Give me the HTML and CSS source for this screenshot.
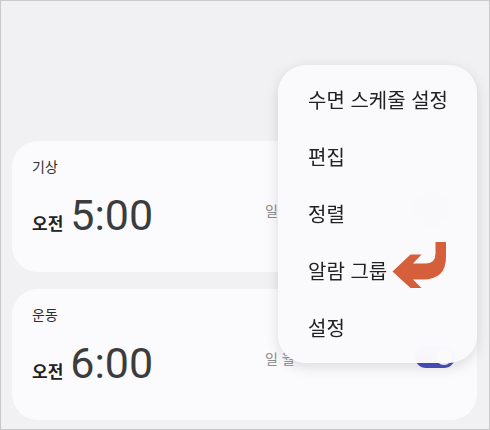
FILE: index.html
```html
<!DOCTYPE html>
<html lang="ko">
<head>
    <meta charset="UTF-8">
    <meta name="viewport" content="width=device-width, initial-scale=1.0">
    <title>알람</title>
    <link rel="stylesheet" href="styles.css">
</head>
<body>
    <div class="screen">
        <div class="alarm-list">
            <div class="card">
                <div class="label">기상</div>
                <div class="row">
                    <div class="time"><span class="ampm">오전</span><span class="clock">5:00</span></div>
                    <div class="days">일 월</div>
                    <div class="toggle on"><span class="knob"></span></div>
                </div>
            </div>
            <div class="card">
                <div class="label">운동</div>
                <div class="row">
                    <div class="time"><span class="ampm">오전</span><span class="clock">6:00</span></div>
                    <div class="days">일 월</div>
                    <div class="toggle on"><span class="knob"></span></div>
                </div>
            </div>
        </div>

        <ul class="menu">
            <li>수면 스케줄 설정</li>
            <li>편집</li>
            <li>정렬</li>
            <li>알람 그룹</li>
            <li>설정</li>
        </ul>

        <svg class="pointer" width="62" height="56" viewBox="0 0 62 56">
            <path d="M3.5 33.5 L21.5 16.5 L32.5 16.5 L24 25.5 L37 25.5 Q46.5 25.5 46.5 15 L46.5 4 L57 4 L57 19 Q57 41.5 34 41.5 L24 41.5 L32.5 50 L21.5 50 Z" fill="#d65f3b"/>
        </svg>
    </div>
</body>
</html>
```

FILE: styles.css
```css
body {
    margin: 0;
    font-family: "Noto Sans CJK KR", "Noto Sans", sans-serif;
    color: #252525;
}
.screen {
    position: relative;
    width: 490px;
    height: 430px;
    box-sizing: border-box;
    border: 1px solid #c9c9cb;
    background-color: #f1f1f3;
    overflow: hidden;
}
.alarm-list {
    display: flex;
    flex-direction: column;
    gap: 17px;
    padding: 140px 12px 0 11px;
}
.card {
    height: 131px;
    box-sizing: border-box;
    padding: 15px 22px 0 20px;
    background-color: #fbfbfd;
    border-radius: 26px;
}
.label {
    font-size: 14px;
    line-height: 20px;
    color: #2e2e2e;
}
.row {
    display: grid;
    grid-template-columns: 233px 1fr 40px;
    align-items: center;
    margin-top: 14px;
}
.time {
    display: flex;
    align-items: baseline;
}
.ampm {
    font-size: 17px;
    font-weight: 700;
    margin-right: 7px;
    color: #222;
}
.clock {
    font-family: Roboto, "Liberation Sans", sans-serif;
    font-size: 43px;
    line-height: 50px;
    color: #3c3c3c;
}
.days {
    font-size: 14px;
    color: #8c8c8c;
    white-space: nowrap;
    margin-bottom: 10px;
}
.toggle {
    position: relative;
    width: 40px;
    height: 22px;
    border-radius: 11px;
    background-color: #e3e3e8;
    margin-bottom: 12px;
}
.toggle.on {
    background-color: #4a50c2;
}
.knob {
    position: absolute;
    top: 3px;
    right: 3px;
    width: 16px;
    height: 16px;
    border-radius: 50%;
    background-color: #fff;
}
.menu {
    position: absolute;
    left: 277px;
    top: 64px;
    width: 199px;
    height: 298px;
    box-sizing: border-box;
    margin: 0;
    padding: 6px 0;
    list-style: none;
    background-color: rgba(250, 250, 252, 0.97);
    backdrop-filter: blur(20px);
    border-radius: 28px;
    box-shadow: 0 4px 14px rgba(0, 0, 0, 0.13);
}
.menu li {
    height: 57px;
    display: flex;
    align-items: center;
    padding-left: 30px;
    font-size: 20px;
    color: #222;
    white-space: nowrap;
}
.pointer {
    position: absolute;
    left: 388px;
    top: 237px;
}
```
